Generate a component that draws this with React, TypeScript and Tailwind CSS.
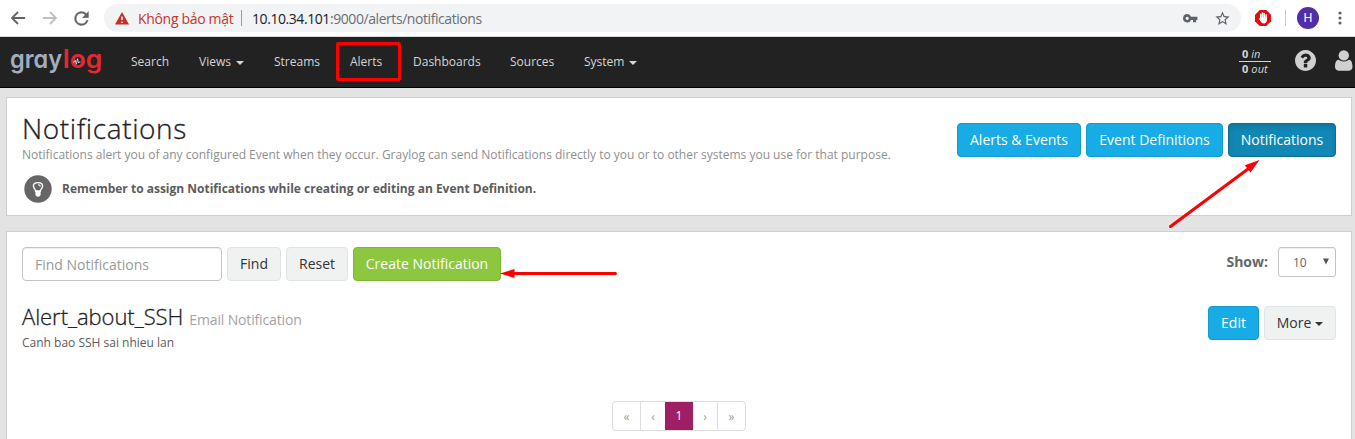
import type { ReactNode } from "react";

const cx = (...parts: (string | false | undefined)[]) => parts.filter(Boolean).join(" ");

function BrowserBar() {
  return (
    <header className="flex h-[37px] items-center border-b border-[#d9dadc] bg-white">
      <div className="flex w-[104px] shrink-0 items-center pl-[9px]">
        <svg width="18" height="18" viewBox="0 0 24 24" fill="#5f6368">
          <path d="M21.5 10.7v2.5H7.3l5.6 5.7L11.2 21 2.4 12l8.8-9 1.7 1.9-5.6 5.8z" />
        </svg>
        <svg className="ml-[14px]" width="18" height="18" viewBox="0 0 24 24" fill="#bdbfc1">
          <path d="M2.5 10.7v2.5h14.2l-5.6 5.7 1.7 2.1 8.8-9-8.8-9-1.7 1.9 5.6 5.8z" />
        </svg>
        <svg className="ml-[12px]" width="21" height="21" viewBox="0 0 24 24" fill="#5f6368">
          <path d="M17.65 6.35A7.96 7.96 0 0 0 12 4a8 8 0 1 0 7.73 10h-2.08A6 6 0 1 1 12 6c1.66 0 3.14.69 4.22 1.78L13 11h7V4z" stroke="#5f6368" strokeWidth="0.4" />
        </svg>
      </div>
      <div className="flex h-7 w-[1137px] shrink-0 items-center rounded-full bg-[#f1f3f4] pr-[10px] pl-[11px]">
        <svg width="14" height="13" viewBox="0 0 14 13">
          <path d="M7 0l7 12.6H0z" fill="#c5302a" />
          <path d="M6.2 4.500h1.600v3.600H6.200zM6.200 9.400h1.600V11H6.200z" fill="#f1f3f4" />
        </svg>
        <span className="ml-[9px] w-[103px] text-[14px] tracking-[-0.32px] whitespace-nowrap text-[#c5352f]">Không bảo mật</span>
        <span className="mr-[10px] h-4 w-px bg-[#9b9ea1]" />
        <span className="text-[14px] tracking-[-0.43px] whitespace-nowrap text-[#6b6f73]">
          <span className="text-[#202124]">10.10.34.101</span>:9000/alerts/notifications
        </span>
        <span className="flex-1" />
        <svg width="15" height="9" viewBox="0 0 15 9" fill="#5f6368">
          <path fillRule="evenodd" d="M4.2 0a4.2 4.2 0 0 1 3.9 2.8H14.4v3.100h-1.300v2.400H10V5.900H8.100A4.200 4.200 0 1 1 4.200 0zM4.200 2.700a1.600 1.600 0 1 0 0 3.200 1.600 1.600 0 0 0 0-3.200z" />
        </svg>
        <svg className="ml-[16px]" width="17" height="17" viewBox="0 0 24 24" fill="#5f6368">
          <path d="M22 9.24l-7.19-.62L12 2 9.19 8.63 2 9.24l5.46 4.73L5.82 21 12 17.27 18.18 21l-1.63-7.03L22 9.24zM12 15.4l-3.76 2.27 1-4.28-3.32-2.88 4.38-.38L12 6.1l1.71 4.04 4.38.38-3.32 2.88 1 4.28L12 15.4z" />
        </svg>
      </div>
      <svg className="ml-[14px]" width="16" height="16" viewBox="0 0 16 16">
        <path d="M4.700 0h6.600L16 4.700v6.600L11.300 16H4.700L0 11.300V4.700z" fill="#e60b0b" />
        <path d="M5.700 10V4.200M7.500 8V2.900M9.300 8V3.400M11.100 10V5" stroke="#fff" strokeWidth="1.500" strokeLinecap="round" />
        <path d="M5 7.500h6.800v2.400c0 2-1.200 3.600-3 3.600-1.500 0-2.300-.7-3-1.900L3.700 8.800l1-.6 1 1z" fill="#fff" />
      </svg>
      <span className="ml-[14px] h-4 w-px bg-[#c9cbce]" />
      <span className="ml-[11px] flex size-[22px] items-center justify-center rounded-full bg-[#512da8] font-['Roboto',sans-serif] text-[12.5px] text-white">
        H
      </span>
      <svg className="ml-[19px]" width="4" height="14" viewBox="0 0 4 14" fill="#5f6368">
        <circle cx="2" cy="2" r="1.6" />
        <circle cx="2" cy="7" r="1.6" />
        <circle cx="2" cy="12" r="1.6" />
      </svg>
    </header>
  );
}

function Caret({ className }: { className?: string }) {
  return (
    <svg className={cx("inline-block shrink-0", className)} width="8" height="4" viewBox="0 0 8 4" fill="currentColor">
      <path d="M0 0h8L4 4z" />
    </svg>
  );
}

function Logo() {
  return (
    <svg width="106" height="50" viewBox="0 0 106 50" className="shrink-0 font-['Inter',sans-serif] font-semibold [font-feature-settings:'cv11']">
      <text x="10" y="31" fontSize="25.500" fill="#a4adbf" textLength="52" lengthAdjust="spacingAndGlyphs">gray</text>
      <text x="62.800" y="31" fontSize="25.500" fill="#e8262f" textLength="39.500" lengthAdjust="spacingAndGlyphs">log</text>
      <path d="M73 25h1.500l.8-1.700 1 4 1.200-5.600 1 4.300.6-1h1.400" fill="none" stroke="#d5d9e0" strokeWidth="0.9" />
    </svg>
  );
}

function NavItem({ children, width, caret }: { children: ReactNode; width: string; caret?: boolean }) {
  return (
    <a className={cx("flex h-full shrink-0 items-center pl-[15px] whitespace-nowrap", width)}>
      {children}
      {caret && <Caret className="mt-[2px] ml-[5px]" />}
    </a>
  );
}

function NavBar() {
  return (
    <nav className="flex h-[51px] items-center border-b border-black bg-[#222] text-[12px] text-[#d6d6d6]">
      <Logo />
      <div className="ml-[10px] flex h-full">
        <NavItem width="w-[68px]">Search</NavItem>
        <NavItem width="w-[75px]" caret>Views</NavItem>
        <NavItem width="w-[76px]">Streams</NavItem>
        <NavItem width="w-[63px]">Alerts</NavItem>
        <NavItem width="w-[97px]">Dashboards</NavItem>
        <NavItem width="w-[74px]">Sources</NavItem>
        <NavItem width="w-[84px]" caret>System</NavItem>
      </div>
      <div className="ml-auto flex items-center pb-[2px]">
        <div className="flex w-8 flex-col text-[11px] leading-[14px]">
          <span className="border-b border-[#d6d6d6] pl-[3px]"><b>0</b> <i>in</i></span>
          <span className="pl-[3px] tracking-[0.1px] whitespace-nowrap"><b>0</b> <i>out</i></span>
        </div>
        <svg className="mb-px ml-[24px]" width="21" height="21" viewBox="0 0 1536 1536" fill="#d0d0d0">
          <path d="M896 1248v-192q0-14-9-23t-23-9H672q-14 0-23 9t-9 23v192q0 14 9 23t23 9h192q14 0 23-9t9-23zm256-672q0-88-55.500-163T958 297t-170-41q-243 0-371 213-15 24 8 42l132 100q7 6 19 6 16 0 25-12 53-68 86-92 34-24 86-24 48 0 85.500 26t37.500 59q0 38-20 61t-68 45q-63 28-115.500 86.500T640 892v36q0 14 9 23t23 9h192q14 0 23-9t9-23q0-19 21.500-49.500T972 829q32-18 49-28.500t46-35 44.500-48 28-60.500 12.500-81zm384 192q0 209-103 385.500T1153.500 1433 768 1536t-385.500-103T103 1153.500 0 768t103-385.500T382.500 103 768 0t385.500 103T1433 382.500 1536 768z" />
        </svg>
        <svg className="mb-px ml-[19px]" width="18" height="21" viewBox="0 0 18 21" fill="#d0d0d0">
          <path d="M3.700 9.700C1.100 9.700 0 13 0 16.600 0 19 1.500 20.700 3.500 20.700h10.500c2 0 3.500-1.700 3.500-4.100 0-3.600-1.100-6.900-3.700-6.900-.3 0-2.200 1.800-5 1.800S4 9.700 3.700 9.700z" />
          <circle cx="8.800" cy="5.400" r="5.200" />
        </svg>
        <span className="w-[2px]" />
      </div>
    </nav>
  );
}

type Tone = "info" | "active" | "plain" | "success";

const tones: Record<Tone, string> = {
  info: "border-[#1599cf] bg-[#17ace5] text-white",
  active: "border-[#0e6d91] bg-[#1187b5] text-white shadow-[inset_0_3px_5px_rgba(0,0,0,0.125)]",
  plain: "border-[#e1e4e4] bg-[#f0f2f2] text-[#333]",
  success: "border-[#7eb730] bg-[#8dc63f] text-white",
};

function Button({ children, tone, width }: { children: ReactNode; tone: Tone; width: string }) {
  return (
    <button className={cx("flex h-[34px] shrink-0 items-center justify-center rounded-[4px] border pb-[2px] text-[14px] whitespace-nowrap", tones[tone], width)}>
      {children}
    </button>
  );
}

function PageHeader() {
  return (
    <section className="flex h-[119px] justify-between border border-[#cfcfcf] bg-white pr-[15px] pl-[15px]">
      <div className="pt-[15px]">
        <h1 className="text-[28px] leading-[31px] font-light tracking-[0.62px] text-[#222] [-webkit-text-stroke:0.3px_#222]">Notifications</h1>
        <p className="mt-[2px] text-[12px] leading-[17px] whitespace-nowrap text-[#8f8f8f]">
          Notifications alert you of any configured Event when they occur. Graylog can send Notifications directly to you or to other systems you use for that purpose.
        </p>
        <div className="mt-[12px] flex items-center pl-[2px]">
          <svg width="28" height="28" viewBox="0 0 28 28">
            <circle cx="14" cy="14" r="13.700" fill="#666" />
            <path d="M10.700 13.900c-.8-.8-1.300-1.800-1.300-2.800 0-2.400 2.100-3.500 4.600-3.500s4.600 1.100 4.600 3.500c0 1-.5 2-1.300 2.800-.7.800-.8 1.500-.9 2.300h-4.800c-.1-.8-.2-1.500-.9-2.300z" fill="#666" stroke="#fff" strokeWidth="1.400" />
            <path d="M11.400 15.500h5.200v4c0 1.200-1 2.200-2.600 2.200s-2.600-1-2.600-2.200z" fill="#fff" />
            <path d="M14 9.800c1.500 0 2.200.7 2.200 1.700" fill="none" stroke="#fff" strokeWidth="1.100" />
          </svg>
          <strong className="ml-[10px] text-[12px] font-bold whitespace-nowrap text-[#5c5c5c]">
            Remember to assign Notifications while creating or editing an Event Definition.
          </strong>
        </div>
      </div>
      <div className="flex gap-[5px] pt-[25px]">
        <Button tone="info" width="w-[124px]">Alerts &amp; Events</Button>
        <Button tone="info" width="w-[137px]">Event Definitions</Button>
        <Button tone="active" width="w-[108px]">Notifications</Button>
      </div>
    </section>
  );
}

function Pagination() {
  const cell = "flex h-full items-center justify-center border-r border-[#ddd] pt-[2px]";
  return (
    <div className="mx-auto flex h-[30px] w-[134px] overflow-hidden rounded-[4px] border border-[#ddd] text-[12px] text-[#9b9b9b]">
      <span className={cx(cell, "w-[28px]")}>«</span>
      <span className={cx(cell, "w-[24px] border-r-0")}>‹</span>
      <span className="-my-px flex h-[30px] w-[28px] items-center justify-center bg-[#9e1f63] text-[12px] text-white">1</span>
      <span className={cx(cell, "w-[25px]")}>›</span>
      <span className="flex h-full w-[27px] items-center justify-center pt-[2px]">»</span>
    </div>
  );
}

function NotificationList() {
  return (
    <section className="h-[220px] border border-[#cfcfcf] bg-white px-[15px] pt-[15px]">
      <div className="flex items-start">
        <div className="flex gap-[5px]">
          <input
            className="h-[34px] w-[200px] rounded-[4px] border border-[#c4c4c4] bg-white px-3 text-[14px] text-[#555] shadow-[inset_0_1px_1px_rgba(0,0,0,0.075)] placeholder:text-[#999]"
            placeholder="Find Notifications"
          />
          <Button tone="plain" width="w-[54px]">Find</Button>
          <Button tone="plain" width="w-[62px]">Reset</Button>
          <Button tone="success" width="w-[148px]">Create Notification</Button>
        </div>
        <div className="ml-auto flex items-center">
          <span className="pb-[2px] text-[14px] font-bold text-[#666]">Show:</span>
          <div className="ml-[10px] flex h-[30px] w-[58px] items-center justify-between rounded-[3px] border border-[#c4c4c4] pr-[6px] pl-[14px] text-[12px] text-[#666] shadow-[inset_0_1px_1px_rgba(0,0,0,0.075)]">
            <span className="pt-px">10</span>
            <svg width="6" height="7" viewBox="0 0 6 7" fill="#555" className="mb-[2px]">
              <path d="M0 0.500h6L3 6.500z" />
            </svg>
          </div>
        </div>
      </div>
      <div className="mt-[25px] flex h-[95px] justify-between">
        <div>
          <h2 className="-mt-px flex items-baseline text-[22px] leading-[22px] whitespace-nowrap text-[#222]">
            <span className="font-light tracking-[-0.05px] [-webkit-text-stroke:0.3px_#222]">Alert_about_SSH</span>
            <small className="ml-[6px] text-[14px] tracking-[-0.15px] text-[#a3a3a3]">Email Notification</small>
          </h2>
          <p className="mt-[3px] text-[12px] leading-[17px] text-[#5c5c5c]">Canh bao SSH sai nhieu lan</p>
        </div>
        <div className="flex gap-[5px]">
          <Button tone="info" width="w-[51px]">Edit</Button>
          <Button tone="plain" width="w-[72px]">
            More<Caret className="mt-[3px] ml-1" />
          </Button>
        </div>
      </div>
      <Pagination />
    </section>
  );
}

function Annotations() {
  return (
    <svg className="pointer-events-none absolute top-0 left-0" width="1355" height="439" viewBox="0 0 1355 439">
      <rect x="337.500" y="43.500" width="62" height="36" rx="1" fill="none" stroke="#f00" strokeWidth="3" />
      <path d="M1170.500 226.500L1250 167.500M615.500 273.500H513" stroke="#f00" strokeWidth="3" strokeLinecap="round" />
      <path d="M1259.500 160L1244.800 165.300 1250.500 172.500zM500 273.500l14.500-4.500v9z" fill="#f00" />
    </svg>
  );
}

export default function App() {
  return (
    <div className="relative h-[439px] w-[1355px] overflow-hidden bg-[#e3e3e3] font-['Open_Sans',sans-serif]">
      <BrowserBar />
      <NavBar />
      <main className="flex flex-col gap-[15px] pt-[9px] pr-[3px] pl-[6px]">
        <PageHeader />
        <NotificationList />
      </main>
      <Annotations />
    </div>
  );
}
